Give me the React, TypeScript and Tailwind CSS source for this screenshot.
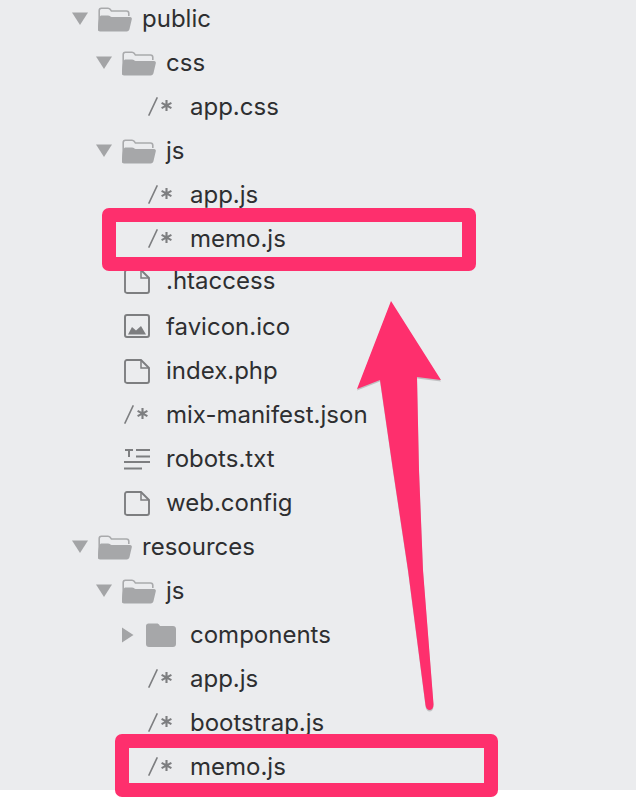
const F = "font-['Inter',sans-serif]";

function Triangle({ open }: { open: boolean }) {
  return (
    <svg width="16" height="16" viewBox="0 0 16 16" className="shrink-0">
      {open ? <path d="M0 1.5H16L8 14Z" fill="#a3a4a6" /> : <path d="M2 0.5L13.5 8L2 15.5Z" fill="#a3a4a6" />}
    </svg>
  );
}

function FolderOpen() {
  return (
    <svg width="34" height="25" viewBox="0 0 34 25" className="shrink-0">
      <path d="M1.2 22V3.5C1.2 2.2 2 1.2 3.4 1.2H10C11.2 1.2 11.8 1.8 12.4 2.6L13.4 4H28.5C30 4 30.8 4.9 30.8 6.3V9" fill="none" stroke="#a9aaac" strokeWidth="1.6" />
      <path d="M0 23V21C0 16 1 9 3 8.5L10 8.5C12 8.5 12.5 10 13.5 10H32C33.5 10 34 11 33.8 12.2L31.5 22C31.2 23.6 30.2 24.4 28.6 24.4H2C0.8 24.4 0 24 0 23Z" fill="#a6a7a9" />
    </svg>
  );
}

function FolderClosed() {
  return (
    <svg width="30" height="24" viewBox="0 0 30 24" className="shrink-0">
      <path d="M0 3C0 1.4 1 0.4 2.5 0.4H11C12 0.4 12.6 1 13.2 1.8L14 3H27C28.8 3 30 4 30 6V21C30 22.8 28.8 24 27 24H3C1.2 24 0 22.8 0 21Z" fill="#a6a7a9" />
    </svg>
  );
}

function Comment() {
  return (
    <span className="flex w-[26px] shrink-0 items-center justify-between">
      <svg width="26" height="24" viewBox="0 0 26 24">
        <path d="M1 20L9 3" stroke="#7d7e80" strokeWidth="1.7" strokeLinecap="round" fill="none" />
        <path d="M18.5 5V16M13.6 7.9L23.4 13.1M23.4 7.9L13.6 13.1" stroke="#7d7e80" strokeWidth="2.1" fill="none" />
      </svg>
    </span>
  );
}

function FileIcon() {
  return (
    <svg width="26" height="25" viewBox="0 0 26 25" className="shrink-0">
      <path d="M1 3C1 1.8 1.8 1 3 1H17L25 9V22C25 23.2 24.2 24 23 24H3C1.8 24 1 23.2 1 22Z" fill="none" stroke="#7d7e80" strokeWidth="1.9" />
      <path d="M17 1V9H25" fill="none" stroke="#7d7e80" strokeWidth="1.5" />
    </svg>
  );
}

function ImageIcon() {
  return (
    <svg width="26" height="26" viewBox="0 0 26 26" className="shrink-0">
      <rect x="1" y="1" width="24" height="22" rx="2" fill="none" stroke="#7d7e80" strokeWidth="2" />
      <path d="M4 20.5L8 13L12 16.5L17 12L22 20.5Z" fill="#7d7e80" />
    </svg>
  );
}

function TextIcon() {
  return (
    <svg width="26" height="22" viewBox="0 0 26 22" className="shrink-0">
      <path d="M1 2H9M5 2V9M12 2H26M12 8.5H26M0 14H26M0 20.5H18" stroke="#7d7e80" strokeWidth="2" fill="none" />
    </svg>
  );
}

type Kind = "open" | "closed" | "comment" | "file" | "image" | "text";

const rows: { name: string; depth: number; kind: Kind; raised?: boolean }[] = [
  { name: "public", depth: 0, kind: "open" },
  { name: "css", depth: 1, kind: "open" },
  { name: "app.css", depth: 2, kind: "comment" },
  { name: "js", depth: 1, kind: "open" },
  { name: "app.js", depth: 2, kind: "comment" },
  { name: "memo.js", depth: 2, kind: "comment" },
  { name: ".htaccess", depth: 1, kind: "file", raised: true },
  { name: "favicon.ico", depth: 1, kind: "image" },
  { name: "index.php", depth: 1, kind: "file" },
  { name: "mix-manifest.json", depth: 1, kind: "comment" },
  { name: "robots.txt", depth: 1, kind: "text" },
  { name: "web.config", depth: 1, kind: "file" },
  { name: "resources", depth: 0, kind: "open" },
  { name: "js", depth: 1, kind: "open" },
  { name: "components", depth: 2, kind: "closed" },
  { name: "app.js", depth: 2, kind: "comment" },
  { name: "bootstrap.js", depth: 2, kind: "comment" },
  { name: "memo.js", depth: 2, kind: "comment" },
];

const leftOf = ["pl-[72px]", "pl-[96px]", "pl-[120px]"];
const leafLeft = ["pl-[98px]", "pl-[124px]", "pl-[148px]"];

function Row({ name, depth, kind, raised }: { name: string; depth: number; kind: Kind; raised?: boolean }) {
  const folder = kind === "open" || kind === "closed";
  return (
    <div className={`flex h-[44px] items-center ${raised ? "pb-[4px]" : ""} ${folder ? leftOf[depth] : leafLeft[depth]}`}>
      {folder && (
        <span className="flex w-[26px] shrink-0 items-center">
          <Triangle open={kind === "open"} />
        </span>
      )}
      {kind === "open" && <FolderOpen />}
      {kind === "closed" && <FolderClosed />}
      {kind === "comment" && <Comment />}
      {kind === "file" && <FileIcon />}
      {kind === "image" && <ImageIcon />}
      {kind === "text" && <TextIcon />}
      <span className={`${kind === "closed" ? "ml-[14px]" : kind === "open" ? "ml-[10px]" : "ml-[16px]"} text-[24px] leading-[30px] text-[#2e2f31]`}>
        {name}
      </span>
    </div>
  );
}

function Highlight({ className }: { className: string }) {
  return <div className={`absolute rounded-[7px] border-[14px] border-[#fe2f6d] ${className}`} />;
}

const ARROW = "M391 301L441 380L417 377L419 470L423 570L433.5 704C433.8 711.5 426.3 712 425.5 705L408 570L393 470L380 380L357 389Z";

export default function App() {
  return (
    <div className={`relative h-[798px] w-[636px] overflow-hidden bg-white ${F}`}>
      <div className="h-[790px] overflow-hidden bg-[#ebecee]">
        <div className="-mt-[3px]">
          {rows.map((r, i) => (
            <Row key={i} {...r} />
          ))}
        </div>
      </div>
      <Highlight className="left-[102px] top-[208px] h-[63px] w-[374px]" />
      <Highlight className="left-[115px] top-[734px] h-[63px] w-[383px]" />
      <svg width="636" height="798" viewBox="0 0 636 798" className="absolute left-0 top-0">
        <path d={ARROW} fill="#000" fillOpacity="0.18" transform="translate(0 1.5)" />
        <path d={ARROW} fill="#fe2f6d" />
      </svg>
    </div>
  );
}
